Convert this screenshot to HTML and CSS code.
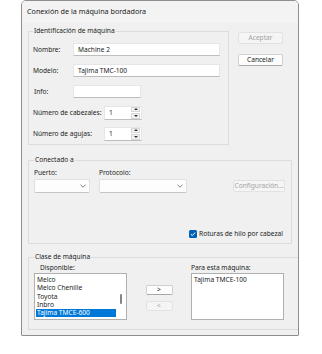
FILE: index.html
```html
<!DOCTYPE html>
<html lang="es">
<head>
<meta charset="UTF-8" />
<title>Conexión de la máquina bordadora</title>
<link rel="stylesheet" href="styles.css">
</head>
<body>
<div class="dialog">
  <div class="titlebar">Conexión de la máquina bordadora</div>
  <div class="content">
    <div class="top-row">
      <fieldset class="group ident">
        <legend>Identificación de máquina</legend>
        <div class="row">
          <label class="lbl">Nombre:</label>
          <div class="textbox wide">Machine 2</div>
        </div>
        <div class="row">
          <label class="lbl">Modelo:</label>
          <div class="textbox wide">Tajima TMC-100</div>
        </div>
        <div class="row">
          <label class="lbl info">Info:</label>
          <div class="textbox short"></div>
        </div>
        <div class="row">
          <label class="lbl long">Número de cabezales:</label>
          <div class="spinner">
            <span class="value">1</span>
            <span class="arrows"><span class="arr up"></span><span class="arr down"></span></span>
          </div>
        </div>
        <div class="row">
          <label class="lbl long">Número de agujas:</label>
          <div class="spinner">
            <span class="value">1</span>
            <span class="arrows"><span class="arr up"></span><span class="arr down"></span></span>
          </div>
        </div>
      </fieldset>
      <div class="side-buttons">
        <button class="btn disabled">Aceptar</button>
        <button class="btn">Cancelar</button>
      </div>
    </div>

    <fieldset class="group conn">
      <legend>Conectado a</legend>
      <div class="conn-grid">
        <label class="small-lbl">Puerto:</label>
        <label class="small-lbl">Protocolo:</label>
        <span></span>
        <div class="combo"><svg width="6" height="4" viewBox="0 0 6 4"><polyline points="0.5,0.8 3,3.2 5.5,0.8" fill="none" stroke="#606060" stroke-width="0.8"/></svg></div>
        <div class="combo"><svg width="6" height="4" viewBox="0 0 6 4"><polyline points="0.5,0.8 3,3.2 5.5,0.8" fill="none" stroke="#606060" stroke-width="0.8"/></svg></div>
        <button class="btn disabled config">Configuración...</button>
      </div>
      <div class="check-row">
        <span class="checkbox"><svg width="8" height="8" viewBox="0 0 8 8"><polyline points="1.8,4.2 3.3,5.6 6.2,2.5" fill="none" stroke="#fff" stroke-width="1"/></svg></span>
        <span>Roturas de hilo por cabezal</span>
      </div>
    </fieldset>

    <fieldset class="group clase">
      <legend>Clase de máquina</legend>
      <div class="clase-grid">
        <label class="small-lbl disp">Disponible:</label>
        <span></span>
        <label class="small-lbl">Para esta máquina:</label>
        <div class="listbox">
          <div class="items">
            <div class="item">Melco</div>
            <div class="item">Melco Chenille</div>
            <div class="item">Toyota</div>
            <div class="item">Inbro</div>
            <div class="item selected">Tajima TMCE-600</div>
          </div>
          <div class="scroll"><span class="thumb"></span></div>
        </div>
        <div class="move-buttons">
          <button class="btn mini">&gt;</button>
          <button class="btn mini disabled">&lt;</button>
        </div>
        <div class="listbox">
          <div class="items">
            <div class="item">Tajima TMCE-100</div>
          </div>
        </div>
      </div>
    </fieldset>
  </div>
</div>
</body>
</html>
```

FILE: styles.css
```css
* {
  box-sizing: border-box;
}
body {
  margin: 0;
  background: #fff;
  font-family: "Noto Sans", "Open Sans", sans-serif;
  font-size: 6.6px;
  color: #1b1b1b;
  white-space: nowrap;
}
.dialog {
  margin-left: 21px;
  width: 278px;
  height: 336px;
  border: 1px solid #8e8e8e;
  border-radius: 5px 5px 1px 1px;
  background: #f0f0f0;
  overflow: hidden;
}
.titlebar {
  height: 22px;
  line-height: 20px;
  padding-left: 5px;
  font-size: 7.2px;
  background: #f3f3f3;
}
.content {
  padding: 3px 0 0 6px;
}
.group {
  margin: 0;
  padding: 0 6px 0 4px;
  border: 1px solid #dcdcdc;
  min-width: 0;
}
.group legend {
  padding: 0 1px;
  line-height: 10px;
  height: 10px;
}
.top-row {
  display: flex;
  gap: 9px;
}
.ident {
  width: 201px;
  height: 119px;
  padding-top: 7px;
}
.row {
  display: flex;
  align-items: center;
  height: 13px;
  margin-bottom: 8px;
}
.lbl {
  width: 40px;
}
.lbl.info {
  padding-left: 1px;
}
.lbl.long {
  width: 71px;
  padding-left: 0;
}
.textbox {
  height: 13px;
  background: #fff;
  border: 1px solid #e6e6e6;
  border-bottom-color: #bdbdbd;
  line-height: 11px;
  padding-left: 4px;
}
.textbox.wide {
  width: 147px;
}
.textbox.short {
  width: 68px;
}
.spinner {
  display: flex;
  width: 38px;
  height: 14px;
  background: #fff;
  border: 1px solid #e6e6e6;
  border-bottom-color: #bdbdbd;
}
.spinner .value {
  flex: 1;
  line-height: 12px;
  padding-left: 4px;
}
.arrows {
  display: flex;
  flex-direction: column;
  gap: 1px;
  padding: 0 1px;
  width: 11px;
}
.arr {
  flex: 1;
  background: #f3f3f3;
  border: 1px solid #d8d8d8;
  display: flex;
  align-items: center;
  justify-content: center;
}
.arr::after {
  content: "";
  border-left: 2px solid transparent;
  border-right: 2px solid transparent;
}
.arr.up::after {
  border-bottom: 2px solid #333;
}
.arr.down::after {
  border-top: 2px solid #333;
}
.side-buttons {
  display: flex;
  flex-direction: column;
  gap: 10px;
  padding-top: 6px;
}
.btn {
  font-family: inherit;
  font-size: 6.6px;
  color: #1b1b1b;
  background: #fdfdfd;
  border: 1px solid #d0d0d0;
  border-bottom-color: #a8a8a8;
  border-radius: 2px;
  width: 45px;
  height: 12px;
  padding: 0;
  line-height: 10px;
}
.btn.disabled {
  color: #a2a2a2;
  background: #f5f5f5;
  border-color: #e2e2e2;
}
.conn {
  width: 264px;
  height: 89px;
  margin-top: 10px;
  padding: 0 6px 0 5px;
}
.conn-grid {
  display: grid;
  grid-template-columns: 56px 88px 1fr;
  grid-template-rows: 13px 14px;
  column-gap: 9px;
  margin-top: 1px;
  align-items: center;
}
.small-lbl {
  line-height: 10px;
}
.combo {
  height: 14px;
  background: #fdfdfd;
  border: 1px solid #e0e0e0;
  border-bottom-color: #c4c4c4;
  border-radius: 2px;
  display: flex;
  align-items: center;
  justify-content: flex-end;
  padding-right: 3px;
}
.combo svg {
  display: block;
}
.config {
  justify-self: end;
  width: 52px;
}
.check-row {
  display: flex;
  justify-content: flex-end;
  align-items: center;
  gap: 2px;
  margin-top: 36px;
  padding-right: 2px;
}
.checkbox {
  width: 8px;
  height: 8px;
  border-radius: 1.5px;
  background: #005fb8;
  display: flex;
}
.clase {
  width: 271px;
  height: 78px;
  margin-top: 8px;
  padding: 0 14px 0 5px;
}
.clase-grid {
  display: grid;
  grid-template-columns: 93px 64px 93px;
  grid-template-rows: 11px 47px;
  align-items: center;
}
.disp {
  padding-left: 6px;
}
.listbox {
  height: 47px;
  background: #fff;
  border: 1px solid #b0b0b0;
  display: flex;
  align-self: stretch;
}
.items {
  flex: 1;
  padding: 2px 0 0 1px;
}
.item {
  height: 8.3px;
  line-height: 8.3px;
  padding-left: 1px;
}
.item.selected {
  background: #0078d7;
  color: #fff;
}
.scroll {
  width: 10px;
  display: flex;
  justify-content: center;
  align-items: center;
  padding-top: 5px;
}
.thumb {
  width: 1.5px;
  height: 10px;
  background: #858585;
  border-radius: 1px;
}
.move-buttons {
  display: flex;
  flex-direction: column;
  align-items: center;
  gap: 6px;
  padding-top: 2px;
}
.btn.mini {
  width: 27px;
  height: 10px;
  line-height: 8px;
}
```
